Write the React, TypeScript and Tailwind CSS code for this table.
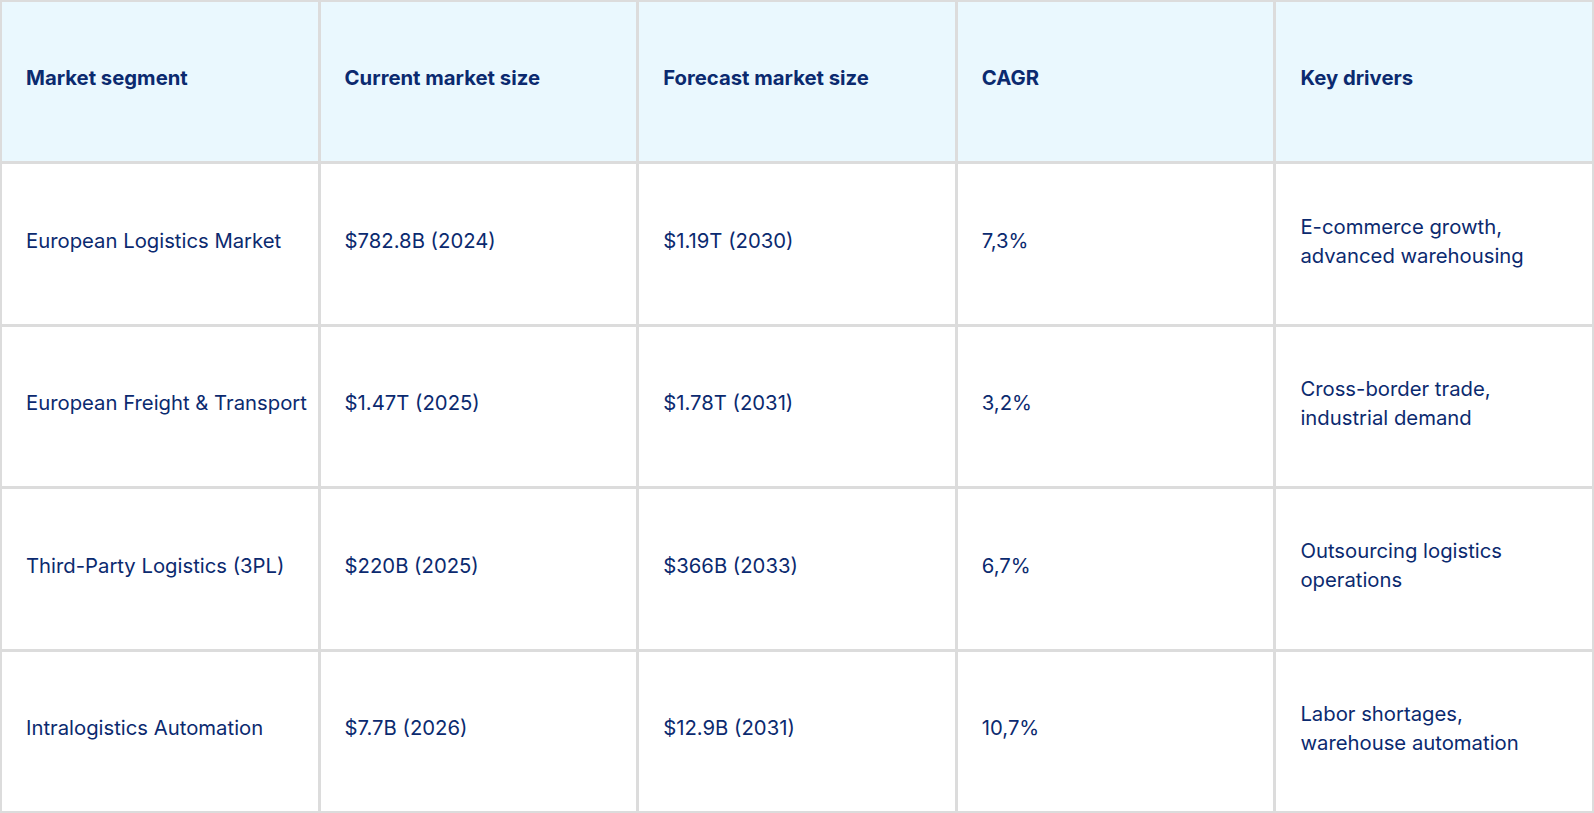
const headers = ["Market segment", "Current market size", "Forecast market size", "CAGR", "Key drivers"];

const rows: string[][] = [
  ["European Logistics Market", "$782.8B (2024)", "$1.19T (2030)", "7,3%", "E-commerce growth, advanced warehousing"],
  ["European Freight & Transport", "$1.47T (2025)", "$1.78T (2031)", "3,2%", "Cross-border trade, industrial demand"],
  ["Third-Party Logistics (3PL)", "$220B (2025)", "$366B (2033)", "6,7%", "Outsourcing logistics operations"],
  ["Intralogistics Automation", "$7.7B (2026)", "$12.9B (2031)", "10,7%", "Labor shortages, warehouse automation"],
];

export default function App() {
  return (
    <div className="w-[1594px] h-[813px] bg-white" style={{ fontFamily: "Inter, 'Liberation Sans', sans-serif" }}>
      <div className="grid grid-cols-5 grid-rows-5 gap-[3px] bg-[#dcdcdc] p-[2px] h-full text-[20.3px] leading-[29px] text-[#0b2a6f]">
        {headers.map((h) => (
          <div key={h} className="bg-[#eaf8fe] flex items-center pl-6 pr-2 pb-[9px] font-bold">
            {h}
          </div>
        ))}
        {rows.map((r, i) =>
          r.map((cell, j) => (
            <div key={`${i}-${j}`} className="bg-white flex items-center pl-6 pr-2 pb-[7px]">
              <span className={j === 4 ? "max-w-[250px]" : "whitespace-nowrap"}>{cell}</span>
            </div>
          ))
        )}
      </div>
    </div>
  );
}
